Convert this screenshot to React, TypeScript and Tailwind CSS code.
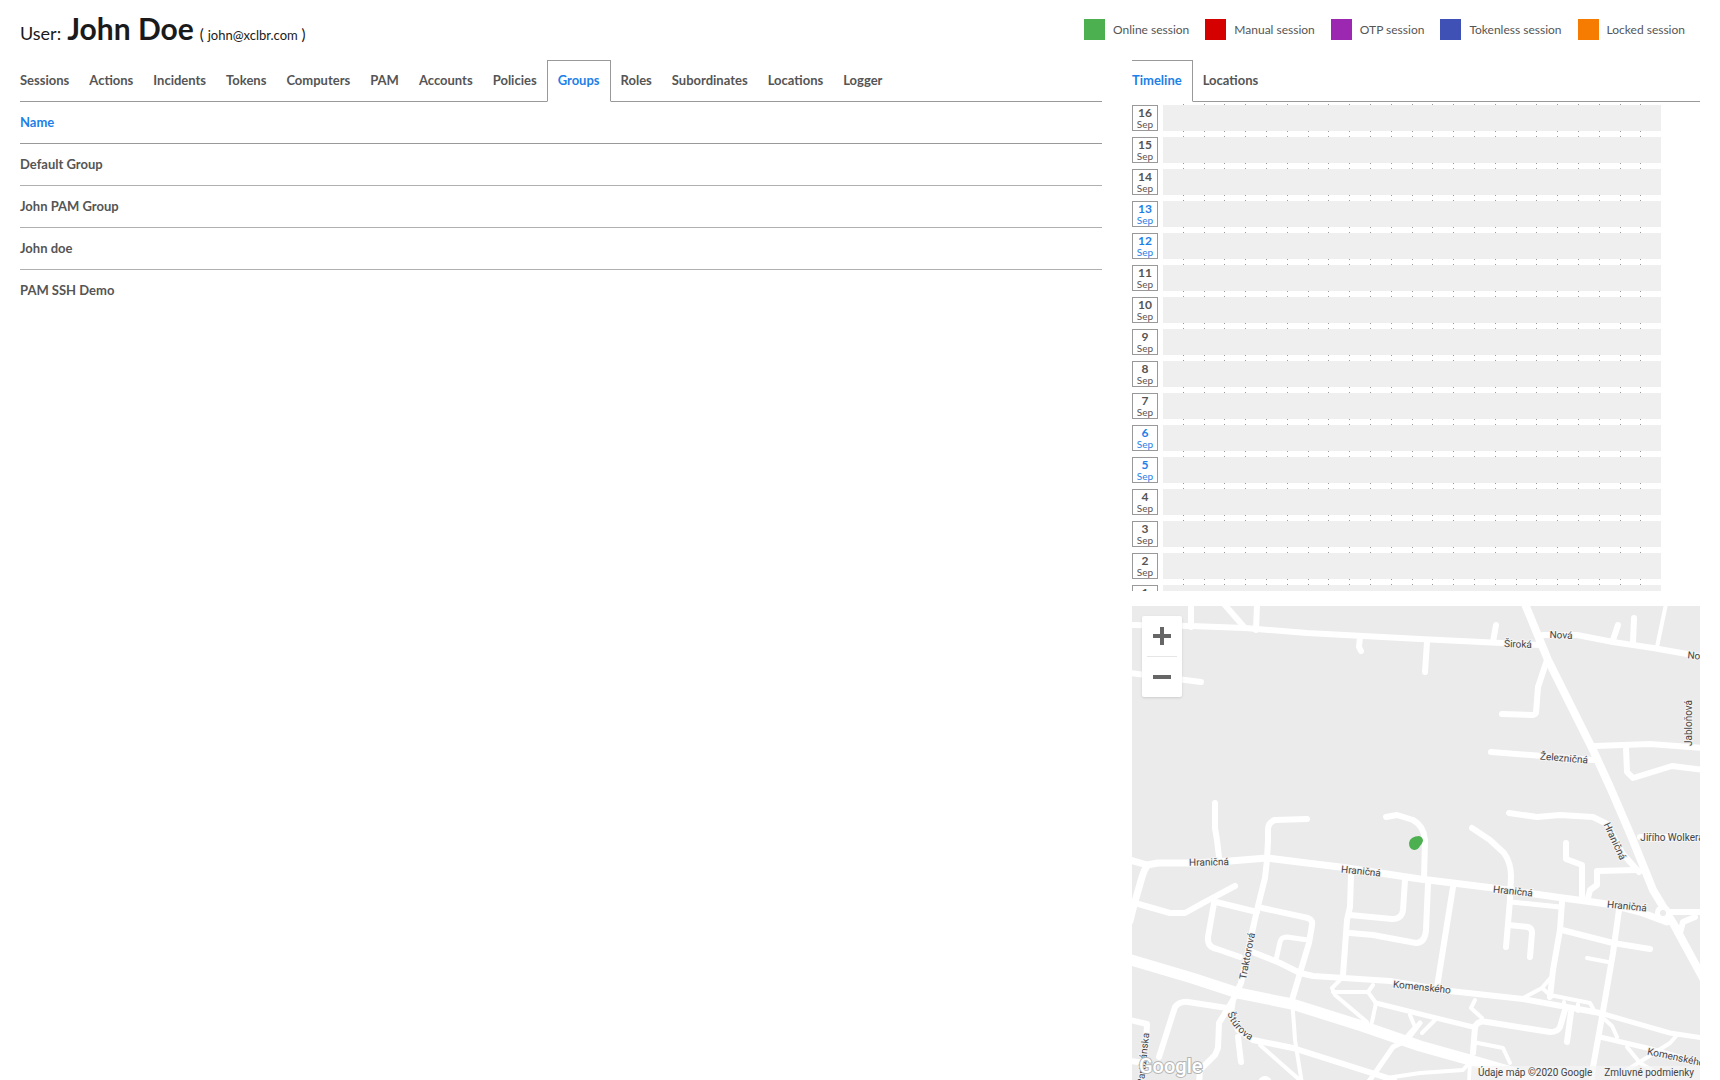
import { useState } from "react"
import clsx from "clsx"

const LEGEND = [
  { label: "Online session", color: "bg-[#4caf50]" },
  { label: "Manual session", color: "bg-[#d50000]" },
  { label: "OTP session", color: "bg-[#9c27b0]" },
  { label: "Tokenless session", color: "bg-[#3f51b5]" },
  { label: "Locked session", color: "bg-[#f57c00]" },
]

const USER_TABS = [
  "Sessions",
  "Actions",
  "Incidents",
  "Tokens",
  "Computers",
  "PAM",
  "Accounts",
  "Policies",
  "Groups",
  "Roles",
  "Subordinates",
  "Locations",
  "Logger",
]

const GROUPS = ["Default Group", "John PAM Group", "John doe", "PAM SSH Demo"]

const DAYS = Array.from({ length: 16 }, (_, i) => 16 - i)
const WEEKEND = [13, 12, 6, 5]
const HOURS = Array.from({ length: 24 }, (_, i) => i)

// roads grouped by stroke width
const ROADS = [
  {
    width: 11,
    paths: ["M-4 353L60 372L106 387L160 398L230 420L288 440L338 454L390 469L420 479"],
  },
  {
    width: 8,
    paths: ["M393 -2L416 54L461 144L478 181L500 232L521 284L541 317L572 374"],
  },
  {
    width: 7,
    paths: [
      "M-2 254L15 259L26 257L58 257L98 255L135 252L175 257L208 261L248 267L288 273L321 277L361 282L431 292L461 296L481 299L508 306L535 316",
      "M15 260Q12 264 10 271L2 299L-2 315",
    ],
  },
  {
    width: 6,
    paths: [
      "M-2 19L59 20L113 22L175 27L288 33L370 37L408 39",
      "M59 -2V21",
      "M92 -2L113 22",
      "M125 -2L124 24",
      "M228 31L227 41L229 45",
      "M-2 67L69 76",
      "M83 197L83 222L85 234L87 251",
      "M175 213L143 214Q136 216 136 224L136 234L135 254L133 272L125 304L121 322L109 377L101 394L87 417L86 442L83 449L68 464L67 478",
      "M254 211L265 209L281 214Q292 220 293 234L292 274",
      "M296 278L294 324Q293 337 284 337L241 329L218 327",
      "M3 297L38 307L53 307L71 297L103 280",
      "M84 296L125 306",
      "M82 297L76 331Q75 341 85 343L108 351",
      "M118 345L148 357L168 367L181 370L258 375L288 380L318 385L391 393L468 407",
      "M130 302L176 312Q181 314 180 319L177 337L168 367L160 394",
      "M-2 414L15 418L14 440",
      "M-2 455L15 457",
      "M27 451L43 401Q48 395 56 396L95 402",
      "M101 394L99 406L106 424L121 434L161 442L262 474",
      "M106 431L109 456",
      "M219 269L218 301L215 314L211 369",
      "M218 309L260 313Q270 313 271 304L273 274",
      "M340 222L358 234L372 247Q379 257 379 270L378 294L374 341",
      "M376 319L396 321Q400 322 400 327L398 351",
      "M321 281L313 331L305 381",
      "M434 237L434 253L450 259L450 292",
      "M505 264L465 265L465 279L458 284L456 292",
      "M430 296L428 324L421 364L418 391",
      "M430 324L481 337L518 343",
      "M487 304L481 347L470 411L461 461L459 478",
      "M341 447L343 421Q346 414 355 416L418 426Q426 426 428 421L433 404",
      "M439 406L435 436",
      "M377 207L405 211L428 209L461 211L475 218L490 247L507 266",
      "M415 54L406 81L404 107Q403 109 400 109L370 108",
      "M411 29L445 29L481 36L521 42L555 48L572 51",
      "M364 19L361 36",
      "M486 19L481 34",
      "M502 12L501 36",
      "M295 36L293 66",
      "M463 140L518 138L572 142",
      "M494 141L495 166L501 172L540 160L572 164",
      "M359 146L461 154",
      "M508 231H572",
      "M535 306L572 306",
      "M548 327L551 316L563 311",
    ],
  },
  {
    width: 5,
    paths: [
      "M176 334L155 331Q149 331 148 336L144 354",
      "M379 296L428 301",
      "M468 407L538 427L572 432",
      "M468 431L515 442L572 458",
      "M244 397L288 408L341 421",
      "M288 417L275 434L261 441L243 467L235 478",
    ],
  },
  {
    width: 4,
    paths: [
      "M160 394L162 419L163 434L170 478",
      "M128 439L170 476",
      "M211 371L200 382L203 389L235 416",
      "M201 386L236 386L241 379",
      "M236 386L244 397L240 416",
      "M278 409L283 421L275 430",
      "M290 427L303 414",
      "M255 472L288 467L331 464L338 456",
      "M338 456L337 478",
      "M421 369L410 382L391 392",
      "M410 382L418 389L458 397L463 406",
      "M343 394L339 402L350 412",
      "M341 436L371 442L378 457",
      "M455 352L476 356",
      "M432 396V403M446 398V405",
      "M470 411L480 420L485 431",
      "M545 429L538 437L495 464",
      "M495 441L508 457L530 470",
      "M534 -2L525 41",
    ],
  },
]

const STREETS = [
  { name: "Široká", x: 386, y: 38, angle: 2 },
  { name: "Nová", x: 429, y: 29, angle: 2 },
  { name: "Nová", x: 567, y: 50, angle: 6 },
  { name: "Jabloňová", x: 556, y: 117, angle: -90 },
  { name: "Železničná", x: 432, y: 152, angle: 5 },
  { name: "Hraničná", x: 483, y: 235, angle: 65 },
  { name: "Jiřího Wolkera", x: 540, y: 231, angle: 0 },
  { name: "Hraničná", x: 77, y: 256, angle: -1 },
  { name: "Hraničná", x: 229, y: 265, angle: 6 },
  { name: "Hraničná", x: 381, y: 285, angle: 6 },
  { name: "Hraničná", x: 495, y: 300, angle: 6 },
  { name: "Traktorová", x: 115, y: 350, angle: -79 },
  { name: "Komenského", x: 290, y: 381, angle: 6 },
  { name: "Komenského", x: 544, y: 451, angle: 12 },
  { name: "Partizánska", x: 11, y: 453, angle: -84 },
]

type TabsProps = {
  tabs: string[]
  active: string
  onChange: (tab: string) => void
}

function Tabs({ tabs, active, onChange }: TabsProps) {
  return (
    <div role="tablist" className="flex h-[42px] font-bold">
      {tabs.map((tab) => (
        <button
          key={tab}
          type="button"
          role="tab"
          aria-selected={tab === active}
          onClick={() => onChange(tab)}
          className={clsx(
            "first:border-l-0 first:pl-0",
            tab === active
              ? "border border-[#999] border-b-transparent px-2.5 text-[#1e7fe8]"
              : "border-y border-t-transparent border-b-[#999] px-2.5"
          )}
        >
          {tab}
        </button>
      ))}
      <div className="flex-1 border-b border-[#999]" />
    </div>
  )
}

function GroupsTable() {
  return (
    <table className="w-full border-separate border-spacing-0 text-left font-bold">
      <thead>
        <tr className="text-[#1e7fe8]">
          <th scope="col" className="h-[42px] border-b border-[#999]">
            Name
          </th>
        </tr>
      </thead>
      <tbody>
        {GROUPS.map((group) => (
          <tr key={group} className="group">
            <td className="h-[42px] border-b border-[#b0b0b0] group-last:border-transparent">{group}</td>
          </tr>
        ))}
      </tbody>
    </table>
  )
}

function Timeline() {
  return (
    <div className="flex h-[489px] flex-col gap-1 overflow-hidden pt-0.5 pr-[39px]">
      {DAYS.map((day) => (
        <div key={day} className="flex h-7 shrink-0 items-center gap-[5px]">
          <div
            className={clsx(
              "flex h-[26px] w-[26px] flex-col items-center border border-[#999] text-[10px] leading-[10px]",
              WEEKEND.includes(day) && "text-[#1e7fe8]"
            )}
          >
            <span className="text-xs leading-[13px] font-bold">{day}</span>
            <span>Sep</span>
          </div>
          <div className="relative h-7 flex-1">
            <div className="flex h-full">
              {HOURS.map((hour) => (
                <div key={hour} className="flex-1 border-r border-dotted border-[#999] last:border-r-0" />
              ))}
            </div>
            <div className="absolute inset-x-0 inset-y-px bg-[#efefef]" />
          </div>
        </div>
      ))}
    </div>
  )
}

function SessionMap() {
  return (
    <div className="relative min-h-[474px] flex-1 overflow-hidden bg-[#ebebeb]">
      <svg
        viewBox="0 0 568 474"
        preserveAspectRatio="xMinYMin slice"
        className="absolute inset-0 h-full w-full font-[Roboto,sans-serif]"
      >
        {ROADS.map((road) => (
          <g
            key={road.width}
            fill="none"
            stroke="#fff"
            strokeWidth={road.width}
            strokeLinecap="round"
            strokeLinejoin="round"
          >
            {road.paths.map((d) => (
              <path key={d} d={d} />
            ))}
          </g>
        ))}
        <circle cx="531" cy="307" r="8" fill="#fff" />
        <circle cx="531" cy="307" r="3" fill="#ebebeb" />
        <circle cx="133" cy="477" r="7" fill="#fff" />
        <g
          fontSize="10"
          fill="#444"
          stroke="#f4f4f4"
          strokeWidth="2"
          paintOrder="stroke"
          textAnchor="middle"
          dominantBaseline="central"
        >
          {STREETS.map((s, i) => (
            <text key={i} transform={`translate(${s.x} ${s.y}) rotate(${s.angle})`}>
              {s.name}
            </text>
          ))}
          <path id="sturova" d="M99 406Q105 423 124 433" fill="none" stroke="none" />
          <text textAnchor="start">
            <textPath href="#sturova">Štúrova</textPath>
          </text>
        </g>
        <path
          d="M277 237Q277 234 280 232Q283 230 287 230Q291 231 291 235Q290 238 288 240Q286 244 282 244Q277 243 277 237Z"
          fill="#4caf50"
        />
        <text
          x="7"
          y="467"
          fontSize="20"
          fontWeight="500"
          fill="#fff"
          stroke="#b5b5b5"
          strokeWidth="2"
          paintOrder="stroke"
        >
          Google
        </text>
      </svg>

      <div className="absolute top-2.5 left-2.5 flex w-10 flex-col items-center rounded-xs bg-white shadow">
        <button type="button" aria-label="Zoom in" className="flex h-10 w-10 items-center justify-center">
          <svg width="18" height="18" fill="#666">
            <path d="M7 0h4v7h7v4h-7v7H7v-7H0V7h7z" />
          </svg>
        </button>
        <div className="h-px w-[30px] bg-[#e6e6e6]" />
        <button type="button" aria-label="Zoom out" className="flex h-10 w-10 items-center justify-center">
          <svg width="18" height="18" fill="#666">
            <path d="M0 7h18v4H0z" />
          </svg>
        </button>
      </div>

      <div className="absolute right-0 bottom-0 flex h-3.5 bg-[#f5f5f5]/70 font-[Roboto,sans-serif] text-[10px] leading-[14px] text-[#444]">
        <span className="px-1.5">Údaje máp ©2020 Google</span>
        <a href="#terms" className="px-1.5">
          Zmluvné podmienky
        </a>
      </div>
    </div>
  )
}

export default function App() {
  const [userTab, setUserTab] = useState("Groups")
  const [sideTab, setSideTab] = useState("Timeline")

  return (
    <div className="flex min-h-screen flex-col bg-white px-5 font-[Lato,sans-serif] text-[13px] text-[#555]">
      <header className="flex h-[60px] justify-between">
        <h1 className="flex items-baseline gap-1.5 pt-2 text-lg text-[#1a1a1a]">
          User:
          <span className="text-3xl leading-10 font-bold">John Doe</span>
          <span className="text-[15px]">
            ( <span className="text-[13px]">john@xclbr.com</span> )
          </span>
        </h1>
        <ul className="flex gap-4 pt-[19px] pr-[15px] text-xs">
          {LEGEND.map((item) => (
            <li key={item.label} className="flex h-[21px] items-center gap-2">
              <span className={clsx("h-[21px] w-[21px]", item.color)} />
              {item.label}
            </li>
          ))}
        </ul>
      </header>

      <main className="grid flex-1 grid-cols-[1.905fr_1fr] gap-[30px]">
        <section className="min-w-0">
          <Tabs tabs={USER_TABS} active={userTab} onChange={setUserTab} />
          <GroupsTable />
        </section>
        <aside className="flex min-w-0 flex-col">
          <Tabs tabs={["Timeline", "Locations"]} active={sideTab} onChange={setSideTab} />
          <Timeline />
          <div className="h-[15px]" />
          <SessionMap />
        </aside>
      </main>
    </div>
  )
}
